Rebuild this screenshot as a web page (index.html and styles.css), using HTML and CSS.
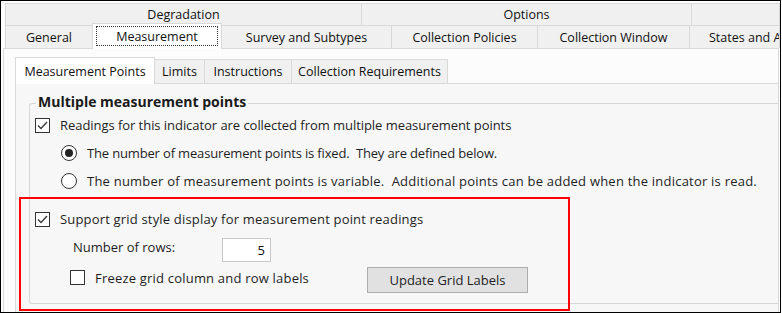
FILE: index.html
```html
<!DOCTYPE html>
<html>
<head>
<meta charset="utf-8">
<link rel="stylesheet" href="styles.css">
</head>
<body>
<div class="window">
  <div class="tabrow row1">
    <div class="tab t-degr">Degradation</div>
    <div class="tab t-opts">Options</div>
    <div class="tab t-rest"></div>
  </div>
  <div class="tabrow row2">
    <div class="tab t-gen">General</div>
    <div class="tab t-meas selected"><span class="focus">Measurement</span></div>
    <div class="tab t-surv">Survey and Subtypes</div>
    <div class="tab t-pol">Collection Policies</div>
    <div class="tab t-win">Collection Window</div>
    <div class="tab t-states">States and A</div>
  </div>
  <div class="panel">
    <div class="subtabs">
      <div class="subtab s-mp selected">Measurement Points</div>
      <div class="subtab s-lim">Limits</div>
      <div class="subtab s-ins">Instructions</div>
      <div class="subtab s-cr">Collection Requirements</div>
    </div>
    <div class="subpanel">
      <div class="group">
        <div class="group-title">Multiple measurement points</div>
        <div class="row r-check1">
          <span class="check checked"><svg viewBox="0 0 15 15" width="15" height="15"><path d="M3 7.5 L6 10.5 L12 4" fill="none" stroke="#3a3a3a" stroke-width="1.4"/></svg></span>
          <span class="lbl lbl-readings">Readings for this indicator are collected from multiple measurement points</span>
        </div>
        <div class="row r-radio">
          <span class="radio on"></span>
          <span class="lbl lbl-fixed">The number of measurement points is fixed.&nbsp; They are defined below.</span>
        </div>
        <div class="row r-radio">
          <span class="radio"></span>
          <span class="lbl lbl-var">The number of measurement points is variable.&nbsp; Additional points can be added when the indicator is read.</span>
        </div>
        <div class="row r-check2">
          <span class="check checked"><svg viewBox="0 0 15 15" width="15" height="15"><path d="M3 7.5 L6 10.5 L12 4" fill="none" stroke="#3a3a3a" stroke-width="1.4"/></svg></span>
          <span class="lbl lbl-grid">Support grid style display for measurement point readings</span>
        </div>
        <div class="row r-rows">
          <span class="lbl rows-lbl">Number of rows:</span>
          <span class="numbox">5</span>
        </div>
        <div class="row r-freeze">
          <span class="check"></span>
          <span class="lbl freeze-lbl">Freeze grid column and row labels</span>
          <span class="btn">Update Grid Labels</span>
        </div>
      </div>
    </div>
  </div>
  <div class="highlight"></div>
</div>
</body>
</html>
```
FILE: styles.css
```css
* { box-sizing: border-box; margin: 0; padding: 0; }
html, body { width: 782px; height: 313px; overflow: hidden; background: #fff; }
body { font-family: "Open Sans", "Noto Sans", sans-serif; font-size: 13px; color: #1e1e1e; }

.window {
  position: relative;
  width: 781px;
  height: 313px;
  border: 1px solid #000;
  background: #fff;
  display: flex;
  flex-direction: column;
  overflow: hidden;
}

.tabrow { display: flex; margin-left: 4px; flex-shrink: 0; font-size: 12.5px; }
.row1 { margin-top: 2px; height: 22px; }
.row2 { height: 23px; position: relative; z-index: 2; }

.tab {
  background: #f0f0f0;
  border: 1px solid #d9d9d9;
  border-left: none;
  border-bottom: none;
  color: #111;
  display: flex;
  align-items: center;
  justify-content: center;
  white-space: nowrap;
  overflow: hidden;
  flex-shrink: 0;
}
.t-degr, .t-gen { border-left: 1px solid #d9d9d9; }
.t-degr { width: 357px; }
.t-opts { width: 330px; }
.t-rest { flex: 1; }
.t-gen { width: 88px; }
.t-meas { width: 129px; }
.t-surv { width: 170px; }
.t-pol { width: 146px; }
.t-win { width: 152px; }
.t-states { flex: 1; justify-content: flex-start; padding-left: 19px; overflow: hidden; }

.t-meas.selected {
  background: #fff;
  margin-top: -2px;
  height: 26px;
  padding: 2px 3px 3px 3px;
  border-left: 1px solid #d9d9d9;
  margin-left: -1px;
  width: 130px;
}
.focus {
  flex: 1;
  align-self: stretch;
  border: 1px dotted #333;
  display: flex;
  align-items: center;
  justify-content: center;
  color: #111;
}

.panel {
  flex: 1;
  margin-left: 2px;
  width: 776px;
  border: 1px solid #d9d9d9;
  border-bottom: none;
  background: #fcfcfc;
  display: flex;
  flex-direction: column;
  overflow: hidden;
}

.subtabs { display: flex; margin: 8px 0 0 11px; height: 26px; flex-shrink: 0; position: relative; z-index: 2; font-size: 12.5px; }
.subtab {
  background: #f0f0f0;
  border: 1px solid #d9d9d9;
  border-left: none;
  border-bottom: none;
  margin-top: 2px;
  display: flex;
  align-items: center;
  justify-content: center;
  color: #111;
  white-space: nowrap;
}
.subtab.selected {
  background: #fff;
  margin-top: 0;
  border-left: 1px solid #d9d9d9;
  height: 27px;
}
.s-mp { width: 140px; }
.s-lim { width: 50px; }
.s-ins { width: 87px; }
.s-cr { width: 156px; }

.subpanel {
  flex: 1;
  margin-left: 11px;
  margin-right: -4px;
  border: 1px solid #d9d9d9;
  border-bottom: none;
  background: #f7f7f7;
  padding: 19px 0 0 13px;
}

.group {
  border: 1px solid #d6d6d6;
  border-right: none;
  border-radius: 3px 0 0 3px;
  padding-bottom: 8px;
}
.group-title {
  width: fit-content;
  margin: -11px 0 0 6px;
  padding: 0 2px;
  background: #f7f7f7;
  line-height: 18px;
  font-weight: bold;
  font-size: 14px;
  color: #1a1a1a;
}

.row { display: flex; align-items: center; white-space: nowrap; }
.r-check1 { height: 28px; padding-left: 5px; }
.r-radio { height: 28px; padding-left: 31px; }
.r-check2 { height: 28px; padding-left: 5px; margin-top: 10px; }
.r-rows { height: 30px; padding-left: 43px; align-items: flex-start; }
.r-freeze { height: 32px; padding-left: 40px; align-items: flex-start; }

.lbl { line-height: 16px; color: #1e1e1e; }
.lbl-readings { letter-spacing: -0.05px; }
.lbl-fixed { letter-spacing: -0.16px; }
.lbl-var { letter-spacing: 0.22px; }
.lbl-grid { letter-spacing: 0.18px; }
.check {
  width: 15px; height: 15px;
  border: 1px solid #333;
  background: #fff;
  margin-right: 10px;
  flex-shrink: 0;
  display: flex;
}
.check svg { margin: -1px; }
.radio {
  width: 16px; height: 16px;
  border: 1px solid #333;
  border-radius: 50%;
  background: #fff;
  margin-right: 10px;
  flex-shrink: 0;
  display: flex;
  align-items: center;
  justify-content: center;
}
.radio.on::after {
  content: "";
  width: 8px; height: 8px;
  border-radius: 50%;
  background: #222;
}

.rows-lbl { width: 149px; margin-top: 6px; }
.numbox {
  width: 49px; height: 24px;
  margin-top: 5px;
  background: #fff;
  border: 1px solid #c8c8c8;
  text-align: right;
  padding-right: 5px;
  line-height: 22px;
  color: #111;
}
.r-freeze .check { margin-top: 7px; }
.freeze-lbl { width: 272px; margin-top: 7px; letter-spacing: 0.2px; }
.btn {
  width: 161px; height: 26px;
  margin-top: 4px;
  background: #e1e1e1;
  border: 1px solid #adadad;
  display: flex;
  align-items: center;
  justify-content: center;
  color: #1e1e1e;
}

.highlight {
  position: absolute;
  left: 18px;
  top: 196px;
  width: 551px;
  height: 114px;
  border: 2px solid #ff0000;
  pointer-events: none;
  z-index: 5;
}
```
